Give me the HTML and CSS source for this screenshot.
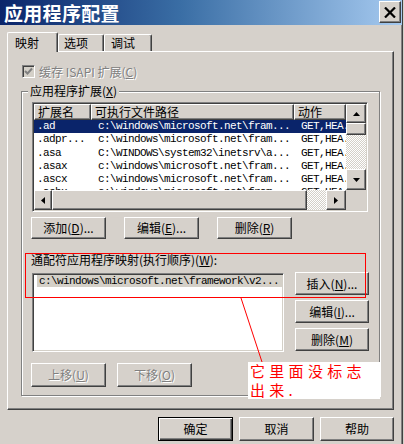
FILE: index.html
```html
<!DOCTYPE html>
<html lang="zh-CN">
<head>
<meta charset="utf-8">
<title>应用程序配置</title>
<link rel="stylesheet" href="styles.css">
</head>
<body>
<div class="window">
  <div class="titlebar">
    <span class="title">应用程序配置</span>
    <button class="close" aria-label="关闭">
      <svg width="12" height="11" viewBox="0 0 12 11"><path d="M1 0.5 L11 10.5 M11 0.5 L1 10.5" stroke="#000" stroke-width="2.2" fill="none"/></svg>
    </button>
  </div>
  <div class="tabs">
    <div class="tab active">映射</div>
    <div class="tab t2">选项</div>
    <div class="tab t3">调试</div>
  </div>
  <div class="panel">
    <div class="check-row">
      <span class="checkbox"><svg width="9" height="9" viewBox="0 0 9 9"><path d="M1 4 L3.5 6.5 L8 1.5" stroke="#808080" stroke-width="2" fill="none"/></svg></span>
      <span class="check-label">缓存 ISAPI 扩展(<u>C</u>)</span>
    </div>
    <div class="group">
      <div class="legend">应用程序扩展(<u>X</u>)</div>
      <div class="listview">
        <div class="lv-main">
          <div class="lv-header">
            <div class="hcell c1">扩展名</div>
            <div class="hcell c2">可执行文件路径</div>
            <div class="hcell c3">动作</div>
          </div>
          <div class="lv-row selected"><span class="cell c1">.ad</span><span class="cell c2">c:\windows\microsoft.net\fram...</span><span class="cell c3">GET,HEA.</span></div>
          <div class="lv-row"><span class="cell c1">.adpr...</span><span class="cell c2">c:\windows\microsoft.net\fram...</span><span class="cell c3">GET,HEA.</span></div>
          <div class="lv-row"><span class="cell c1">.asa</span><span class="cell c2">C:\WINDOWS\system32\inetsrv\a...</span><span class="cell c3">GET,HEA.</span></div>
          <div class="lv-row"><span class="cell c1">.asax</span><span class="cell c2">c:\windows\microsoft.net\fram...</span><span class="cell c3">GET,HEA.</span></div>
          <div class="lv-row"><span class="cell c1">.ascx</span><span class="cell c2">c:\windows\microsoft.net\fram...</span><span class="cell c3">GET,HEA.</span></div>
          <div class="lv-row"><span class="cell c1">.ashx</span><span class="cell c2">c:\windows\microsoft.net\fram...</span><span class="cell c3">GET,HEA.</span></div>
        </div>
        <div class="vscroll">
          <div class="sb-btn up"><svg width="7" height="4" viewBox="0 0 7 4"><polygon points="3.5,0 7,4 0,4" fill="#000"/></svg></div>
          <div class="sb-thumb v"></div>
          <div class="sb-track"></div>
          <div class="sb-btn down"><svg width="7" height="4" viewBox="0 0 7 4"><polygon points="0,0 7,0 3.5,4" fill="#000"/></svg></div>
        </div>
        <div class="hscroll">
          <div class="sb-btn left"><svg width="4" height="7" viewBox="0 0 4 7"><polygon points="4,0 4,7 0,3.5" fill="#000"/></svg></div>
          <div class="sb-thumb h"></div>
          <div class="sb-track"></div>
          <div class="sb-btn right"><svg width="4" height="7" viewBox="0 0 4 7"><polygon points="0,0 4,3.5 0,7" fill="#000"/></svg></div>
        </div>
        <div class="corner"></div>
      </div>
      <div class="btn-row">
        <button class="btn">添加(<u>D</u>)...</button>
        <button class="btn">编辑(<u>E</u>)...</button>
        <button class="btn">删除(<u>R</u>)</button>
      </div>
      <div class="wild-label">通配符应用程序映射(执行顺序)(<u>W</u>):</div>
      <div class="wild-row">
        <div class="wild-list">
          <div class="wild-item">c:\windows\microsoft.net\framework\v2...</div>
        </div>
        <div class="wild-btns">
          <button class="btn wbtn">插入(<u>N</u>)...</button>
          <button class="btn wbtn">编辑(<u>I</u>)...</button>
          <button class="btn wbtn">删除(<u>M</u>)</button>
        </div>
      </div>
      <div class="btn-row move-row">
        <button class="btn disabled">上移(<u>U</u>)</button>
        <button class="btn disabled">下移(<u>O</u>)</button>
      </div>
    </div>
  </div>
  <div class="dlg-btns">
    <button class="btn dlg default">确定</button>
    <button class="btn dlg">取消</button>
    <button class="btn dlg narrow">帮助</button>
  </div>
</div>
<div class="note-rect"></div>
<svg class="note-line" width="404" height="444" viewBox="0 0 404 444"><line x1="241" y1="298" x2="262" y2="362" stroke="#ff0000" stroke-width="1"/></svg>
<div class="note"><div class="note-line1">它里面没标志</div><div class="note-line2">出来.</div></div>
</body>
</html>
```

FILE: styles.css
```css
* { box-sizing: border-box; }

body {
  margin: 0;
  width: 404px;
  height: 444px;
  overflow: hidden;
  position: relative;
  background: #d6d1cb;
  font-family: "Noto Sans CJK SC", "Noto Sans", sans-serif;
  font-size: 12px;
  color: #000;
}

u { text-decoration: underline; text-underline-offset: 1px; }

.window {
  width: 403px;
  height: 444px;
  border-right: 1px solid #404040;
  box-shadow: inset -1px 0 #808080;
}

/* title bar */
.titlebar {
  height: 25px;
  display: flex;
  align-items: flex-start;
  padding-left: 4px;
  background: linear-gradient(to right, #0a246a 0%, #3a6ea5 45%, #a6caf0 100%);
}
.title {
  color: #fff;
  font-weight: bold;
  font-size: 19px;
  line-height: 25px;
  letter-spacing: 0.3px;
}
.close {
  margin: 1px 1px 0 auto;
  width: 22px;
  height: 22px;
  padding: 0;
  display: flex;
  align-items: center;
  justify-content: center;
  background: #d6d1cb;
  border: 1px solid;
  border-color: #fff #404040 #404040 #fff;
  box-shadow: inset -1px -1px #808080;
}

/* tabs */
.tabs {
  position: relative;
  z-index: 1;
  height: 26px;
  display: flex;
  align-items: flex-end;
  padding-left: 7px;
}
.tab {
  height: 17px;
  width: 47px;
  display: flex;
  align-items: center;
  padding-left: 5px;
  line-height: 14px;
  background: #d6d1cb;
  border-top: 1px solid #fff;
  border-left: 1px solid #fff;
  border-right: 1px solid #404040;
  box-shadow: inset -1px 0 #808080;
  border-radius: 2px 2px 0 0;
}
.tab.active {
  width: 51px;
  height: 20px;
  margin-bottom: -1px;
  padding-left: 7px;
}
.tab.t2 { width: 46px; }
.tab.t3 { width: 48px; padding-left: 6px; }

/* panel */
.panel {
  margin-left: 7px;
  width: 387px;
  height: 359px;
  padding-top: 13px;
  border-top: 1px solid #fff;
  border-left: 1px solid #fff;
  border-right: 1px solid #404040;
  border-bottom: 1px solid #404040;
  box-shadow: inset -1px -1px #808080;
}

.check-row {
  display: flex;
  align-items: center;
  gap: 4px;
  height: 13px;
  padding-left: 14px;
}
.checkbox {
  width: 13px;
  height: 13px;
  display: flex;
  align-items: center;
  justify-content: center;
  background: #d4d0c8;
  border: 1px solid;
  border-color: #808080 #fff #fff #808080;
  box-shadow: inset 1px 1px #404040;
}
.check-label {
  color: #808080;
  text-shadow: 1px 1px #fff;
  line-height: 14px;
}

/* group box */
.group {
  position: relative;
  margin: 13px 0 0 13px;
  width: 359px;
  height: 305px;
  padding: 10px 0 0 10px;
  border: 1px solid #808080;
  box-shadow: inset 1px 1px #fff, 1px 1px #fff;
}
.legend {
  position: absolute;
  left: 6px;
  top: -8px;
  padding: 0 2px;
  line-height: 14px;
  background: #d6d1cb;
}

/* list view */
.listview {
  width: 336px;
  height: 110px;
  padding: 1px;
  display: grid;
  grid-template-columns: 312px 20px;
  grid-template-rows: 86px 20px;
  background: #fff;
  border: 1px solid;
  border-color: #808080 #fff #fff #808080;
  box-shadow: inset 1px 1px #404040, inset -1px -1px #d4d0c8;
}
.lv-main { overflow: hidden; }
.lv-header { display: flex; height: 16px; }
.hcell {
  height: 16px;
  padding-left: 3px;
  line-height: 14px;
  background: #d6d1cb;
  border: 1px solid;
  border-color: #fff #404040 #404040 #fff;
  box-shadow: inset -1px -1px #808080;
  white-space: nowrap;
  overflow: hidden;
}
.c1 { width: 57px; }
.c2 { width: 203px; }
.c3 { width: 52px; }
.lv-row {
  display: flex;
  height: 13.3px;
}
.cell {
  font-family: "Liberation Mono", monospace;
  font-size: 11px;
  letter-spacing: -0.6px;
  line-height: 13px;
  white-space: nowrap;
  overflow: hidden;
  padding-left: 7px;
}
.cell.c1 { padding-left: 3px; }
.lv-row.selected { background: #0a246a; color: #fff; }

.vscroll { display: flex; flex-direction: column; }
.hscroll { display: flex; }
.sb-btn {
  display: flex;
  align-items: center;
  justify-content: center;
  background: #d6d1cb;
  border: 1px solid;
  border-color: #fff #404040 #404040 #fff;
  box-shadow: inset -1px -1px #808080;
}
.sb-btn.up { height: 19px; }
.sb-btn.down { height: 21px; }
.sb-btn.left { width: 18px; }
.sb-btn.right { width: 20px; }
.sb-thumb {
  background: #d6d1cb;
  border: 1px solid;
  border-color: #fff #404040 #404040 #fff;
  box-shadow: inset -1px -1px #808080;
}
.sb-thumb.v { height: 12px; }
.sb-thumb.h { width: 255px; }
.sb-track {
  flex: 1;
  background-color: #d4d0c8;
  background-image: repeating-conic-gradient(#ffffff 0 25%, #d4d0c8 0 50%);
  background-size: 2px 2px;
}
.corner { background: #d6d1cb; }

/* buttons */
.btn {
  width: 75px;
  height: 22px;
  padding: 0;
  display: flex;
  align-items: center;
  justify-content: center;
  font-family: "Noto Sans CJK SC", "Noto Sans", sans-serif;
  font-size: 12px;
  line-height: 14px;
  color: #000;
  background: #d6d1cb;
  border: 1px solid;
  border-color: #fff #404040 #404040 #fff;
  box-shadow: inset -1px -1px #808080;
}
.btn.disabled { color: #808080; text-shadow: 1px 1px #fff; }

.btn-row {
  display: flex;
  gap: 18px;
  margin: 5px 0 0 -1px;
}
.wild-label {
  margin: 14px 0 0 -1px;
  line-height: 14px;
  white-space: nowrap;
}
.wild-row {
  display: flex;
  gap: 11px;
  margin-top: 5px;
}
.wild-list {
  width: 252px;
  height: 79px;
  margin-top: 1px;
  padding: 1px;
  background: #fff;
  border: 1px solid;
  border-color: #808080 #fff #fff #808080;
  box-shadow: inset 1px 1px #404040, inset -1px -1px #d4d0c8;
}
.wild-item {
  margin-left: 3px;
  height: 12px;
  padding-left: 2px;
  background: #d4d0c8;
  font-family: "Liberation Mono", monospace;
  font-size: 11px;
  letter-spacing: -0.6px;
  line-height: 12px;
  white-space: nowrap;
  overflow: hidden;
}
.wild-btns {
  display: flex;
  flex-direction: column;
  gap: 5px;
}
.wbtn { width: 74px; height: 23px; }

.move-row { gap: 11px; margin-top: 11px; }
.move-row .btn { height: 24px; }

/* dialog buttons */
.dlg-btns {
  display: flex;
  justify-content: flex-end;
  gap: 6px;
  margin-top: 7px;
  padding-right: 8px;
}
.btn.dlg { height: 24px; }
.btn.narrow { width: 74px; }
.btn.default {
  border-color: #000;
  box-shadow: inset 1px 1px #fff, inset -1px -1px #404040, inset -2px -2px #808080;
}

/* annotations */
.note-rect {
  position: absolute;
  left: 25px;
  top: 253px;
  width: 341px;
  height: 45px;
  border: 1px solid #ff0000;
}
.note-line {
  position: absolute;
  left: 0;
  top: 0;
  pointer-events: none;
}
.note {
  position: absolute;
  left: 248px;
  top: 362px;
  width: 132px;
  height: 37px;
  padding-left: 2px;
  background: #fff;
  color: #ff0000;
  font-size: 15px;
  letter-spacing: 4.3px;
}
.note-line1, .note-line2 {
  height: 18.5px;
  line-height: 18px;
  white-space: nowrap;
}
```
